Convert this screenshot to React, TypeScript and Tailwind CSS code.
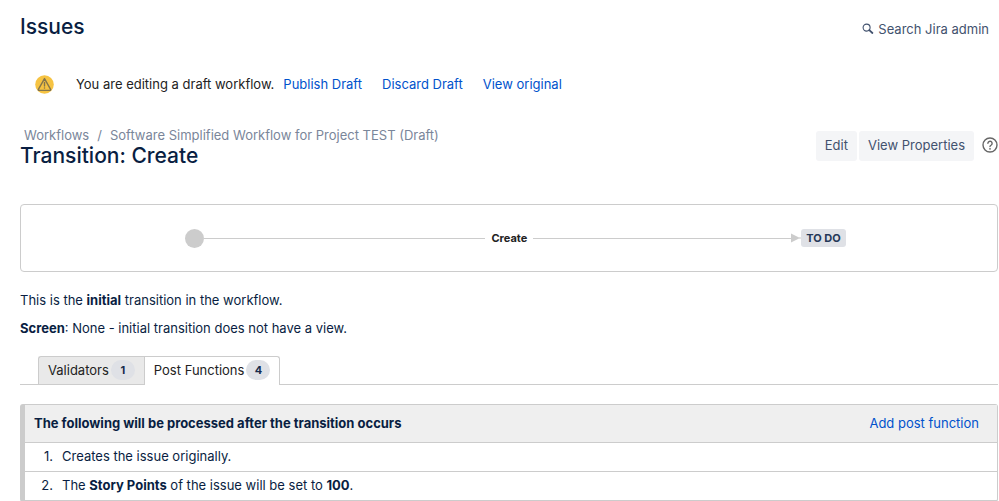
import React from "react";

interface PostFunction {
    id: number;
    description: React.ReactNode;
}

const draftActions = ["Publish Draft", "Discard Draft", "View original"];

const tabs = [
    { name: "Validators", count: 1, active: false },
    { name: "Post Functions", count: 4, active: true },
];

const postFunctions: PostFunction[] = [
    { id: 1, description: "Creates the issue originally." },
    {
        id: 2,
        description: (
            <>
                The <b>Story Points</b> of the issue will be set to <b>100</b>.
            </>
        ),
    },
];

const SearchIcon = () => (
    <svg width="12" height="12" viewBox="0 0 12 12" fill="none" stroke="#42526e">
        <circle cx="4.6" cy="4.6" r="3.5" strokeWidth="1.1" />
        <path d="M7.3 7.2L10.4 10" strokeWidth="1.8" strokeLinecap="round" />
    </svg>
);

const WarningIcon = () => (
    <svg width="19" height="19" viewBox="0 0 19 19" fill="none">
        <circle cx="9.5" cy="9.5" r="9.3" fill="#f6c342" />
        <path
            d="M9.5 3.6L15.6 14.4a.7.7 0 0 1-.6 1H4a.7.7 0 0 1-.6-1Z"
            stroke="#84754b"
            strokeWidth="1.4"
            strokeLinejoin="round"
        />
        <path d="M9.5 7.4V11" stroke="#84754b" strokeWidth="1.4" strokeLinecap="round" />
        <circle cx="9.5" cy="13" r="0.8" fill="#84754b" />
    </svg>
);

const HelpIcon = () => (
    <svg width="16" height="16" viewBox="0 0 16 16" fill="none" stroke="#666">
        <circle cx="8" cy="8" r="7" strokeWidth="1.4" />
        <path
            d="M5.9 6.3a2.1 2.1 0 1 1 3.4 1.7C8.4 8.6 8 8.9 8 9.6"
            strokeWidth="1.4"
            strokeLinecap="round"
        />
        <circle cx="8" cy="11.8" r="0.9" fill="#666" stroke="none" />
    </svg>
);

const Header = () => (
    <header className="flex items-center justify-between pr-[9px]">
        <h1 className="text-[21px] leading-[30px] font-medium">Issues</h1>
        <a href="#search" className="flex items-center gap-1 pt-1 text-[#42526e]">
            <SearchIcon />
            Search Jira admin
        </a>
    </header>
);

const DraftNotice = () => (
    <div className="mt-8 flex items-center pl-[15px] text-[#222]">
        <WarningIcon />
        <span className="ml-[22px]">You are editing a draft workflow.</span>
        <div className="ml-[9px] flex gap-5">
            {draftActions.map((action) => (
                <a key={action} href="#draft" className="text-[#0052cc]">
                    {action}
                </a>
            ))}
        </div>
    </div>
);

const TitleBar = () => (
    <div className="mt-8 flex items-center justify-between">
        <div>
            <nav aria-label="Breadcrumb" className="flex gap-2 pl-1 leading-[18px] text-[#7a869a]">
                <a href="#workflows">Workflows</a>
                <span>/</span>
                <a href="#workflow">Software Simplified Workflow for Project TEST (Draft)</a>
            </nav>
            <h2 className="text-[21px] leading-6 font-medium">Transition: Create</h2>
        </div>
        <div className="flex items-center gap-[2px] pb-[2px] text-[#42526e]">
            <button className="h-[30px] rounded-[3px] bg-[#f4f5f7] px-[9px] pb-[2px]">Edit</button>
            <button className="h-[30px] rounded-[3px] bg-[#f4f5f7] px-[9px] pb-[2px]">
                View Properties
            </button>
            <button aria-label="Help" className="ml-[6px] pb-[2px]">
                <HelpIcon />
            </button>
        </div>
    </div>
);

const TransitionDiagram = () => (
    <div className="mt-9 rounded border border-[#ccc] py-[23px]">
        <div className="flex h-5 items-center pr-[15.5%] pl-[16.8%]">
            <span className="size-[19px] rounded-full bg-[#ccc]" />
            <span className="h-px flex-12 bg-[#ccc]" />
            <span className="px-[6px] text-[11px] font-bold text-[#222]">Create</span>
            <span className="h-px flex-11 bg-[#ccc]" />
            <svg width="10" height="10" viewBox="0 0 10 10" fill="#ccc">
                <path d="M0 0.5L9 5L0 9.5Z" />
                <path d="M8 4.5H10V5.5H8Z" />
            </svg>
            <span className="rounded-[3px] bg-[#dfe1e6] px-[5px] text-[11px] leading-[18px] font-bold text-[#253858]">
                TO DO
            </span>
        </div>
    </div>
);

const Tabs = () => (
    <div role="tablist" className="mt-[18px] flex border-b border-[#ccc] pl-[18px] text-[#222]">
        {tabs.map((tab) => (
            <button
                key={tab.name}
                role="tab"
                aria-selected={tab.active}
                className={
                    tab.active
                        ? "-mb-px flex h-[29px] items-center gap-[2px] rounded-tr-[3px] border border-b-0 border-[#ccc] bg-white px-[9px] pb-[2px]"
                        : "flex h-[28px] items-center gap-[2px] rounded-tl-[3px] border border-r-0 border-b-0 border-[#ccc] bg-[#e9e9e9] px-[9px] pb-px"
                }
            >
                {tab.name}
                <span className="w-6 rounded-full bg-[#dfe1e6] text-center text-[11px] leading-5 font-bold text-[#172b4d]">
                    {tab.count}
                </span>
            </button>
        ))}
    </div>
);

const PostFunctionsTable = () => (
    <table className="mt-[19px] w-full border-separate border-spacing-0 rounded-[3px] border border-l-[5px] border-[#ccc]">
        <thead className="bg-[#efefef]">
            <tr>
                <th colSpan={2} className="h-[38px] border-b border-[#ccc] pb-[2px] pl-[9px] text-left font-bold">
                    The following will be processed after the transition occurs
                </th>
                <th className="border-b border-[#ccc] pr-[18px] pb-[2px] text-right font-normal">
                    <a href="#add" className="text-[#0052cc]">
                        Add post function
                    </a>
                </th>
            </tr>
        </thead>
        <tbody>
            {postFunctions.map((item) => (
                <tr key={item.id}>
                    <td className="h-[29px] w-[37px] border-b border-[#ccc] pr-[9px] pb-[2px] text-right">
                        {item.id}.
                    </td>
                    <td colSpan={2} className="border-b border-[#ccc] pb-[2px]">
                        {item.description}
                    </td>
                </tr>
            ))}
        </tbody>
    </table>
);

export default function App() {
    return (
        <main className="bg-white pt-3 pr-px pl-5 font-['Inter','Liberation_Sans',sans-serif] text-[13px] leading-5 text-[#091e42]">
            <Header />
            <DraftNotice />
            <TitleBar />
            <TransitionDiagram />
            <p className="mt-[18px]">
                This is the <b>initial</b> transition in the workflow.
            </p>
            <p className="mt-2">
                <b>Screen</b>: None - initial transition does not have a view.
            </p>
            <Tabs />
            <PostFunctionsTable />
        </main>
    );
}
